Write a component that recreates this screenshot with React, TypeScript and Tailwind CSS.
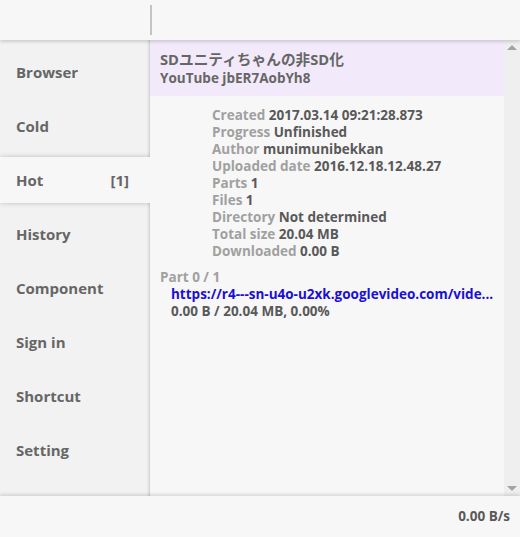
import React from 'react';

const navItems = ['Browser', 'Cold', 'Hot', 'History', 'Component', 'Sign in', 'Shortcut', 'Setting'];

const details: [string, string][] = [
  ['Created', '2017.03.14 09:21:28.873'],
  ['Progress', 'Unfinished'],
  ['Author', 'munimunibekkan'],
  ['Uploaded date', '2016.12.18.12.48.27'],
  ['Parts', '1'],
  ['Files', '1'],
  ['Directory', 'Not determined'],
  ['Total size', '20.04 MB'],
  ['Downloaded', '0.00 B'],
];

export default function App() {
  return (
    <div
      className="w-[520px] h-[537px] flex flex-col bg-[#f7f7f7] font-bold overflow-hidden"
      style={{ fontFamily: '"Open Sans", "Noto Sans CJK JP", sans-serif' }}
    >
      {/* Top bar */}
      <div className="h-[40px] flex items-center bg-[#f7f7f7] relative z-10 shadow-[0_2px_3px_rgba(0,0,0,0.15)]">
        <div className="w-[150px]" />
        <div className="w-[2px] h-[30px] bg-[#c4c4c4]" />
      </div>

      {/* Middle */}
      <div className="flex-1 flex min-h-0">
        {/* Sidebar */}
        <div className="w-[150px] bg-[#f2f2f2] pt-[5px] overflow-hidden shadow-[inset_-3px_0_3px_-2px_rgba(0,0,0,0.18)] relative z-[5]">
          {navItems.map((item) => {
            const active = item === 'Hot';
            return (
              <div key={item} className="h-[54px] py-[4px]">
                <div
                  className={`h-[46px] flex items-center justify-between pl-[16px] pr-[21px] text-[15px] text-[#666] ${
                    active ? 'bg-[#f7f7f7] -mr-[6px] pr-[27px] shadow-[0_0_5px_rgba(0,0,0,0.22)]' : ''
                  }`}
                >
                  <span>{item}</span>
                  {active && <span>[1]</span>}
                </div>
              </div>
            );
          })}
        </div>

        {/* Main */}
        <div className="flex-1 flex min-w-0">
          <div className="flex-1 min-w-0 text-[13.5px] leading-[17px]">
            <div className="h-[56px] bg-[#f2eafa] pl-[10px] pt-[10px] text-[#666]">
              <div className="text-[14.7px] leading-[18px] whitespace-nowrap">SDユニティちゃんの非SD化</div>
              <div className="text-[13.5px] leading-[20px] whitespace-nowrap">YouTube jbER7AobYh8</div>
            </div>
            <div className="pl-[62px] pt-[11px]">
              {details.map(([k, v]) => (
                <div key={k} className="whitespace-nowrap">
                  <span className="text-[#a0a0a0]">{k}</span> <span className="text-[#595959]">{v}</span>
                </div>
              ))}
            </div>
            <div className="pl-[10px] mt-[9px]">
              <div className="text-[#a0a0a0]">Part 0 / 1</div>
              <div className="pl-[11px] whitespace-nowrap">
                <div className="text-[#1a0fd8]">https://r4---sn-u4o-u2xk.googlevideo.com/vide...</div>
                <div className="text-[#595959]">0.00 B / 20.04 MB, 0.00%</div>
              </div>
            </div>
          </div>
          {/* Scrollbar */}
          <div className="w-[16px] bg-[#efefef] flex flex-col justify-between items-center py-[5px]">
            <div className="w-0 h-0 border-l-[5px] border-r-[5px] border-b-[5px] border-l-transparent border-r-transparent border-b-[#a3a3a3]" />
            <div className="w-0 h-0 border-l-[5px] border-r-[5px] border-t-[5px] border-l-transparent border-r-transparent border-t-[#a3a3a3]" />
          </div>
        </div>
      </div>

      {/* Bottom bar */}
      <div className="h-[41px] flex items-center justify-end pr-[10px] bg-[#f7f7f7] text-[13.5px] text-[#595959] relative z-10 shadow-[0_-2px_3px_rgba(0,0,0,0.12)]">
        0.00 B/s
      </div>
    </div>
  );
}
